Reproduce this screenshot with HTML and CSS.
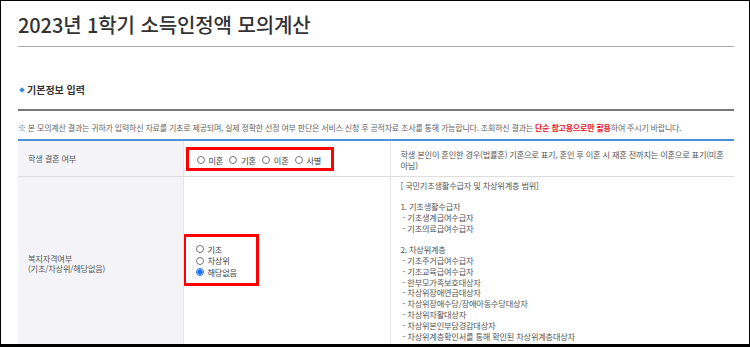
FILE: index.html
```html
<!DOCTYPE html>
<html lang="ko">
<head>
    <meta charset="UTF-8">
    <meta name="viewport" content="width=device-width, initial-scale=1.0">
    <title>소득인정액 모의계산</title>
    <link rel="stylesheet" href="styles.css">
</head>
<body>
    <div class="frame">
        <h1 class="page-title">2023년 1학기 소득인정액 모의계산</h1>

        <h2 class="section-title">기본정보 입력</h2>

        <p class="notice">※ 본 모의계산 결과는 귀하가 입력하신 자료를 기초로 제공되며, 실제 정확한 선정 여부 판단은 서비스 신청 후 공적자료 조사를 통해 가능합니다. 조회하신 결과는 <strong>단순 참고용으로만 활용</strong>하여 주시기 바랍니다.</p>

        <table class="form-table">
            <colgroup>
                <col class="col-label">
                <col class="col-input">
                <col class="col-desc">
            </colgroup>
            <tr class="row-marry">
                <th>학생 결혼 여부</th>
                <td class="cell-input">
                    <div class="mark mark-inline">
                        <label><input type="radio" name="marry"> 미혼</label>
                        <label><input type="radio" name="marry"> 기혼</label>
                        <label><input type="radio" name="marry"> 이혼</label>
                        <label><input type="radio" name="marry"> 사별</label>
                    </div>
                </td>
                <td class="cell-desc">학생 본인이 혼인한 경우(법률혼) 기혼으로 표기, 혼인 후 이혼 시 재혼 전까지는 이혼으로 표기(미혼 아님)</td>
            </tr>
            <tr class="row-welfare">
                <th>복지자격여부<br>(기초/차상위/해당없음)</th>
                <td class="cell-input">
                    <div class="mark mark-stack">
                        <label><input type="radio" name="welfare"> 기초</label>
                        <label><input type="radio" name="welfare"> 차상위</label>
                        <label><input type="radio" name="welfare" checked> 해당없음</label>
                    </div>
                </td>
                <td class="cell-desc cell-list">[ 국민기초생활수급자 및 차상위계층 범위]<br><br>1. 기초생활수급자<br>&nbsp;- 기초생계급여수급자<br>&nbsp;- 기초의료급여수급자<br><br>2. 차상위계층<br>&nbsp;- 기초주거급여수급자<br>&nbsp;- 기초교육급여수급자<br>&nbsp;- 한부모가족보호대상자<br>&nbsp;- 차상위장애연금대상자<br>&nbsp;- 차상위장애수당/장애아동수당대상자<br>&nbsp;- 차상위자활대상자<br>&nbsp;- 차상위본인부담경감대상자<br>&nbsp;- 차상위계층확인서를 통해 확인된 차상위계층대상자</td>
            </tr>
        </table>
    </div>
</body>
</html>
```

FILE: styles.css
```css
html, body {
    margin: 0;
    padding: 0;
    background: #fff;
}

body {
    font-family: "Noto Sans CJK KR", "Noto Sans", sans-serif;
    color: #555;
}

.frame {
    box-sizing: border-box;
    width: 750px;
    height: 347px;
    border: 1px solid #000;
    border-bottom-width: 3px;
    padding: 0 15px 0 17px;
    overflow: hidden;
}

.page-title {
    margin: 0;
    padding: 9px 0 6px 0;
    font-size: 20px;
    line-height: 30px;
    font-weight: 500;
    color: #333;
    border-bottom: 1px solid #a9a9b8;
    letter-spacing: -0.1px;
}

.section-title {
    margin: 0;
    padding: 36px 0 12px 9px;
    font-size: 10px;
    line-height: 14px;
    font-weight: 700;
    color: #333;
    border-bottom: 2px solid #777;
    position: relative;
}

.section-title::before {
    content: "";
    position: absolute;
    left: 2px;
    top: 41px;
    width: 4px;
    height: 4px;
    background: #3b8ad8;
    transform: rotate(45deg);
}

.notice {
    margin: 0;
    padding: 11px 0 5px 0;
    font-size: 8px;
    line-height: 12px;
    color: #666;
    letter-spacing: -0.2px;
    white-space: nowrap;
}

.notice strong {
    color: #e8141e;
    font-weight: 700;
}

.form-table {
    width: 716px;
    border-collapse: collapse;
    table-layout: fixed;
    border-top: 2px solid #4a92dc;
    font-size: 8.2px;
    line-height: 10.8px;
    letter-spacing: -0.2px;
}

.col-label { width: 165px; }
.col-input { width: 207px; }

.form-table th,
.form-table td {
    border-bottom: 1px solid #ddd;
    vertical-align: middle;
    text-align: left;
}

.form-table th {
    background: #f4f4f8;
    font-weight: 400;
    color: #555;
    padding: 0 10px;
    border-right: 1px solid #e6e6ea;
}

.cell-input {
    padding: 0;
    border-right: 1px solid #e6e6ea;
    vertical-align: top !important;
}

.cell-desc {
    padding: 7px 10px 3px 10px;
    color: #555;
}

.row-marry {
    height: 36px;
}

.cell-list {
    padding: 3px 10px 9px 10px;
    vertical-align: top;
}

.mark {
    border: 3px solid #f00;
    box-sizing: border-box;
}

.mark label {
    color: #444;
    display: flex;
    align-items: center;
    gap: 4px;
    white-space: nowrap;
    flex: none;
}

.mark-inline {
    display: flex;
    gap: 6px;
    width: 148px;
    height: 24px;
    margin-left: 2px;
    margin-top: 6px;
    padding: 3px 0 0 8px;
    align-items: center;
}

.mark-stack {
    display: flex;
    flex-direction: column;
    width: 76px;
    height: 52px;
    margin-left: -1px;
    margin-top: 57px;
    padding: 7px 0 0 10px;
    gap: 1px;
}

input[type="radio"] {
    appearance: none;
    -webkit-appearance: none;
    margin: 0;
    width: 8px;
    height: 8px;
    border: 1px solid #777;
    border-radius: 50%;
    background: #fff;
    flex: none;
}

input[type="radio"]:checked {
    border-color: #1a73e8;
    background: radial-gradient(circle, #1a73e8 0 2.4px, #fff 2.8px);
}
```
